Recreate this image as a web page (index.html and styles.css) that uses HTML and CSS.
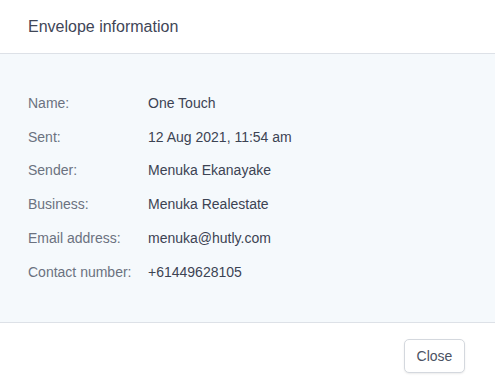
FILE: index.html
```html
<!DOCTYPE html>
<html>
<head>
<meta charset="utf-8">
<link rel="stylesheet" href="styles.css">
</head>
<body>
<div class="modal">
  <div class="header">Envelope information</div>
  <div class="content">
    <div class="row"><div class="label">Name:</div><div class="value">One Touch</div></div>
    <div class="row"><div class="label">Sent:</div><div class="value">12 Aug 2021, 11:54 am</div></div>
    <div class="row"><div class="label">Sender:</div><div class="value">Menuka Ekanayake</div></div>
    <div class="row"><div class="label">Business:</div><div class="value">Menuka Realestate</div></div>
    <div class="row"><div class="label">Email address:</div><div class="value">menuka@hutly.com</div></div>
    <div class="row"><div class="label">Contact number:</div><div class="value">+61449628105</div></div>
  </div>
  <div class="footer"><button class="btn">Close</button></div>
</div>
</body>
</html>
```
FILE: styles.css
```css
html, body { margin: 0; padding: 0; background: #fff; }
body { font-family: "Liberation Sans", Arial, sans-serif; }
.modal { width: 495px; height: 386px; display: flex; flex-direction: column; }
.header {
  height: 54px; box-sizing: border-box; padding: 0 28px;
  display: flex; align-items: center;
  font-size: 16px; color: #3f4657;
  border-bottom: 1px solid #dde1e7;
}
.content {
  background: #f5f9fc;
  padding: 32px 28px 33px;
  border-bottom: 1px solid #dde1e7;
  display: flex; flex-direction: column;
}
.row { display: flex; height: 33.8px; align-items: center; font-size: 14px; }
.label { width: 120px; color: #6b7280; }
.value { color: #3c4353; }
.footer { display: flex; justify-content: flex-end; padding: 16px 30px 0 0; }
.btn {
  font-family: inherit; font-size: 14px; color: #4b5263;
  background: #fff; border: 1px solid #d4d8de; border-radius: 5px;
  width: 61px; height: 34px; padding: 0;
  box-shadow: 0 1px 2px rgba(0,0,0,0.08);
}
```
